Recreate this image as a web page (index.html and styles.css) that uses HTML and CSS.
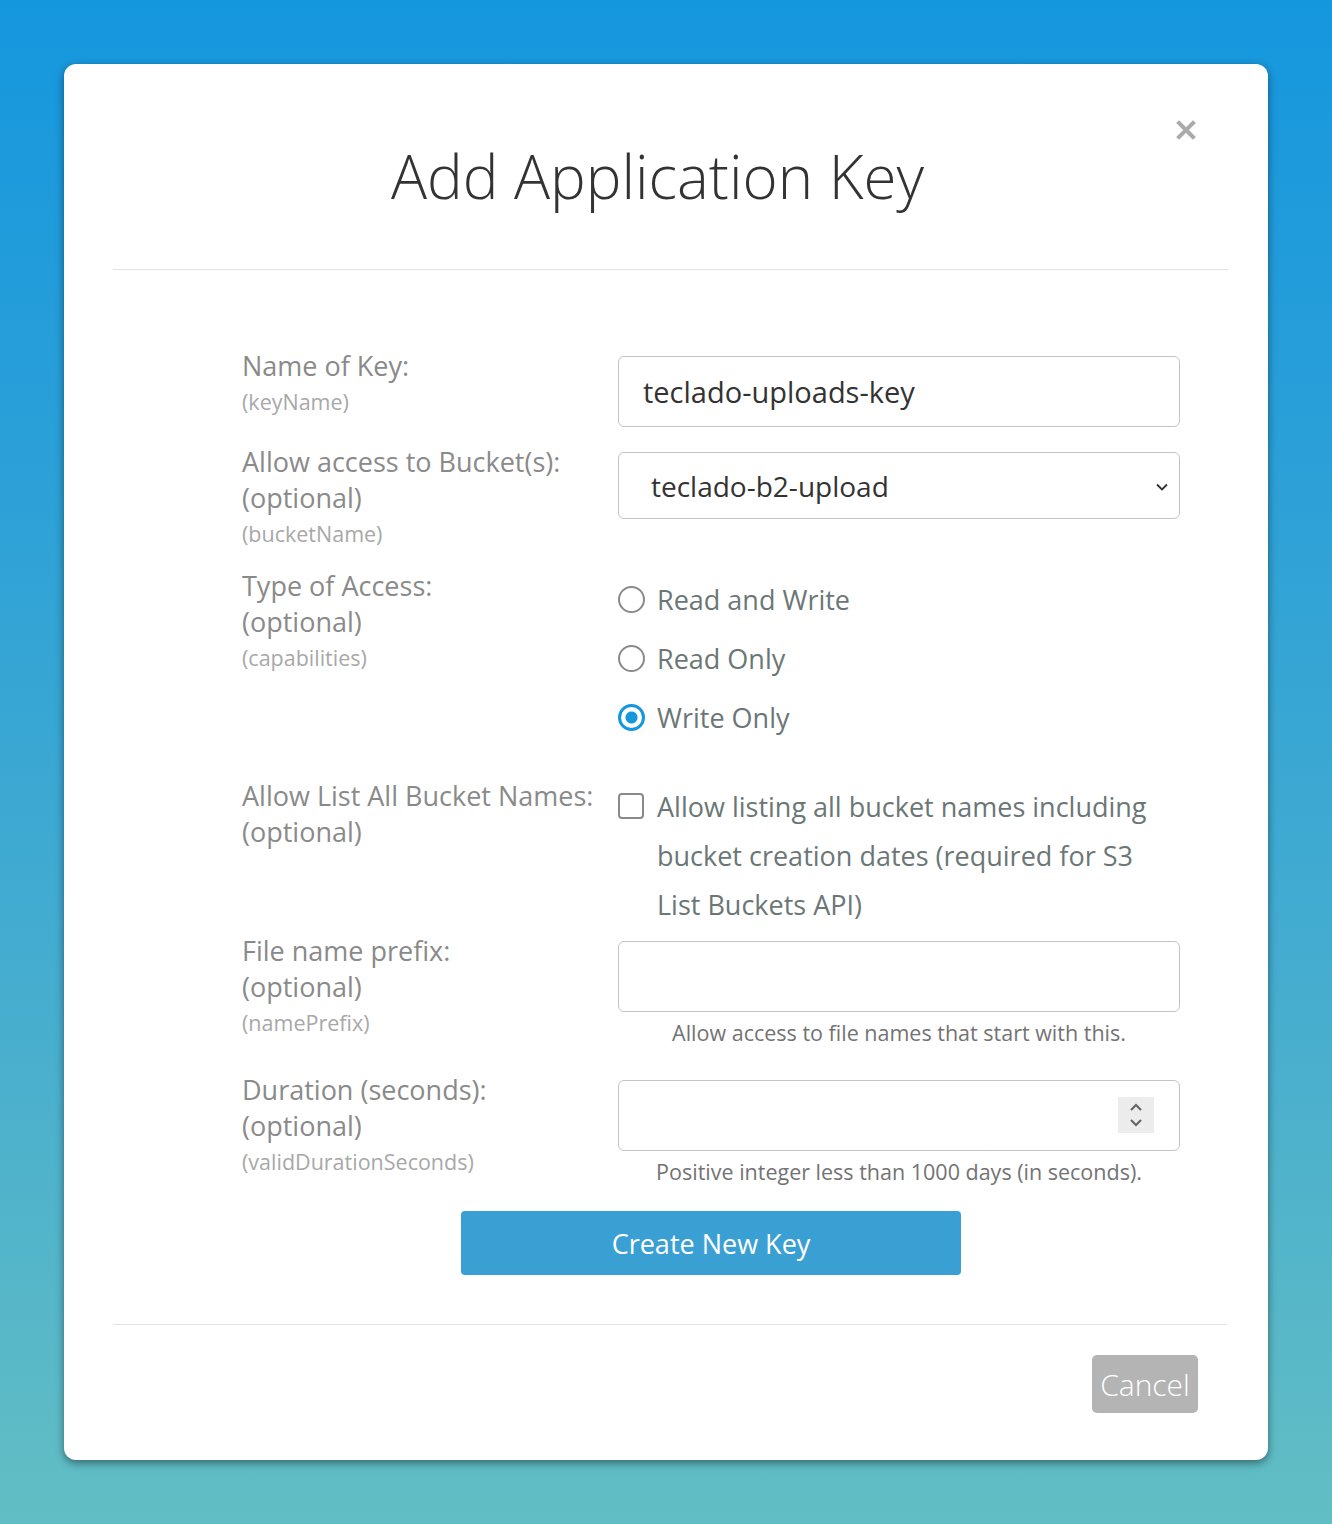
FILE: index.html
```html
<!DOCTYPE html>
<html>
<head>
<meta charset="utf-8">
<link rel="stylesheet" href="styles.css">
</head>
<body>
<div class="modal">
  <div class="modal-header">
    <h1 class="title">Add Application Key</h1>
    <button class="close" aria-label="Close">
      <svg width="20" height="20" viewBox="0 0 20 20"><path d="M3 3 L17 17 M17 3 L3 17" stroke="#ababab" stroke-width="4" stroke-linecap="square"/></svg>
    </button>
  </div>
  <div class="modal-body">
    <div class="row row-1">
      <div class="label"><div class="main">Name of Key:</div><div class="sub">(keyName)</div></div>
      <div class="control"><div class="input input-tall">teclado-uploads-key</div></div>
    </div>
    <div class="row row-2">
      <div class="label"><div class="main">Allow access to Bucket(s):</div><div class="main">(optional)</div><div class="sub">(bucketName)</div></div>
      <div class="control">
        <div class="select">teclado-b2-upload
          <svg class="chev" width="14" height="10" viewBox="0 0 14 10"><path d="M2 2.5 L7 7.5 L12 2.5" fill="none" stroke="#333" stroke-width="1.8"/></svg>
        </div>
      </div>
    </div>
    <div class="row row-3">
      <div class="label"><div class="main">Type of Access:</div><div class="main">(optional)</div><div class="sub">(capabilities)</div></div>
      <div class="control radios">
        <div class="radio-item"><span class="radio"></span><span class="opt">Read and Write</span></div>
        <div class="radio-item"><span class="radio"></span><span class="opt">Read Only</span></div>
        <div class="radio-item"><span class="radio checked"></span><span class="opt">Write Only</span></div>
      </div>
    </div>
    <div class="row row-4">
      <div class="label"><div class="main">Allow List All Bucket Names:</div><div class="main">(optional)</div></div>
      <div class="control check-wrap">
        <span class="checkbox"></span>
        <span class="check-text">Allow listing all bucket names including bucket creation dates (required for S3 List Buckets API)</span>
      </div>
    </div>
    <div class="row row-5">
      <div class="label"><div class="main">File name prefix:</div><div class="main">(optional)</div><div class="sub">(namePrefix)</div></div>
      <div class="control">
        <div class="input input-tall"></div>
        <div class="help">Allow access to file names that start with this.</div>
      </div>
    </div>
    <div class="row row-6">
      <div class="label"><div class="main">Duration (seconds):</div><div class="main">(optional)</div><div class="sub">(validDurationSeconds)</div></div>
      <div class="control">
        <div class="input input-tall number">
          <span class="spin">
            <svg width="16" height="28" viewBox="0 0 16 28"><path d="M3 9 L8 4 L13 9 M3 19 L8 24 L13 19" fill="none" stroke="#666" stroke-width="2.2"/></svg>
          </span>
        </div>
        <div class="help">Positive integer less than 1000 days (in seconds).</div>
      </div>
    </div>
    <div class="actions"><button class="primary">Create New Key</button></div>
  </div>
  <div class="modal-footer">
    <button class="cancel">Cancel</button>
  </div>
</div>
</body>
</html>
```
FILE: styles.css
```css
html, body {
  margin: 0;
  padding: 0;
}
body {
  width: 1332px;
  height: 1524px;
  overflow: hidden;
  background: linear-gradient(to bottom, #1597de 0%, #2ba0d8 30%, #46adcf 65%, #62bec4 100%);
  font-family: "Open Sans", "Noto Sans", sans-serif;
  padding-top: 64px;
  box-sizing: border-box;
}
.modal {
  margin: 0 64px;
  height: 1396px;
  background: #fff;
  border-radius: 12px;
  box-shadow: 0 3px 9px rgba(0, 0, 0, 0.45);
  display: flex;
  flex-direction: column;
}
.modal-header {
  position: relative;
  margin: 0 40px 0 49px;
  height: 205px;
  border-bottom: 1px solid #e3e3e3;
  display: flex;
  align-items: center;
  justify-content: center;
}
.title {
  margin: 18px 26px 0 0;
  font-weight: 300;
  font-size: 60px;
  color: #333;
  letter-spacing: 0;
}
.close {
  position: absolute;
  right: 32px;
  top: 56px;
  border: 0;
  background: none;
  padding: 0;
  width: 20px;
  height: 20px;
}
.close svg { display: block; }
.modal-body {
  margin: 0 88px 0 178px;
  padding-top: 78px;
  padding-bottom: 49px;
}
.row {
  display: flex;
}
.label {
  width: 376px;
  flex: none;
}
.main {
  font-size: 27px;
  line-height: 36px;
  color: #8a8a8a;
}
.sub {
  font-size: 21.5px;
  line-height: 36px;
  color: #a8a8a8;
}
.control {
  width: 562px;
  flex: none;
}
.row-1 .control, .row-2 .control, .row-5 .control, .row-6 .control { padding-top: 8px; }
.input {
  box-sizing: border-box;
  border: 1px solid #c4c4c4;
  border-radius: 6px;
  font-size: 29px;
  color: #333;
  padding: 0 24px;
  display: flex;
  align-items: center;
}
.input-tall { height: 71px; }
.select {
  position: relative;
  box-sizing: border-box;
  height: 67px;
  border: 1px solid #c4c4c4;
  border-radius: 6px;
  font-size: 28px;
  color: #333;
  padding: 0 32px;
  display: flex;
  align-items: center;
}
.chev {
  position: absolute;
  right: 10px;
  top: 29px;
}
.row-2 { margin-top: 17px; }
.row-3 { margin-top: 16px; }
.radios { padding-top: 2px; }
.radio-item {
  height: 59px;
  display: flex;
  align-items: center;
}
.radio {
  box-sizing: border-box;
  width: 27px;
  height: 27px;
  border: 2.5px solid #8a8a8a;
  border-radius: 50%;
  margin-right: 12px;
  flex: none;
}
.radio.checked {
  border: 3px solid #1597de;
  background: radial-gradient(circle, #1597de 0 5.5px, #fff 6.5px);
}
.opt {
  font-size: 27px;
  color: #6b7777;
}
.row-4 { margin-top: 31px; }
.check-wrap {
  display: flex;
  align-items: flex-start;
  padding-top: 4px;
}
.checkbox {
  box-sizing: border-box;
  width: 26px;
  height: 26px;
  border: 2.5px solid #8a8a8a;
  border-radius: 4px;
  margin-right: 13px;
  margin-top: 11px;
  flex: none;
}
.check-text {
  font-size: 27px;
  line-height: 49px;
  color: #6b7777;
}
.row-5 { margin-top: 4px; }
.row-6 { margin-top: 25px; }
.help {
  font-size: 21.5px;
  line-height: 28px;
  color: #737373;
  text-align: center;
  margin-top: 7px;
}
.number { position: relative; }
.spin {
  position: absolute;
  right: 25px;
  top: 16px;
  width: 36px;
  height: 36px;
  background: #ececec;
  display: flex;
  align-items: center;
  justify-content: center;
}
.actions {
  display: flex;
  justify-content: center;
  margin-top: 25px;
}
.primary {
  width: 500px;
  height: 64px;
  border: 0;
  border-radius: 4px;
  background: #3aa0d4;
  color: #fff;
  font-family: "Open Sans", sans-serif;
  font-size: 27px;
  font-weight: 400;
}
.modal-footer {
  margin: 0 41px 0 49px;
  border-top: 1px solid #e3e3e3;
  padding-top: 30px;
  display: flex;
  justify-content: flex-end;
  padding-right: 29px;
}
.cancel {
  width: 106px;
  height: 58px;
  border: 0;
  border-radius: 5px;
  background: #b4b4b4;
  color: #fff;
  font-family: "Open Sans", sans-serif;
  font-size: 30px;
  font-weight: 300;
  padding: 0;
}
```
